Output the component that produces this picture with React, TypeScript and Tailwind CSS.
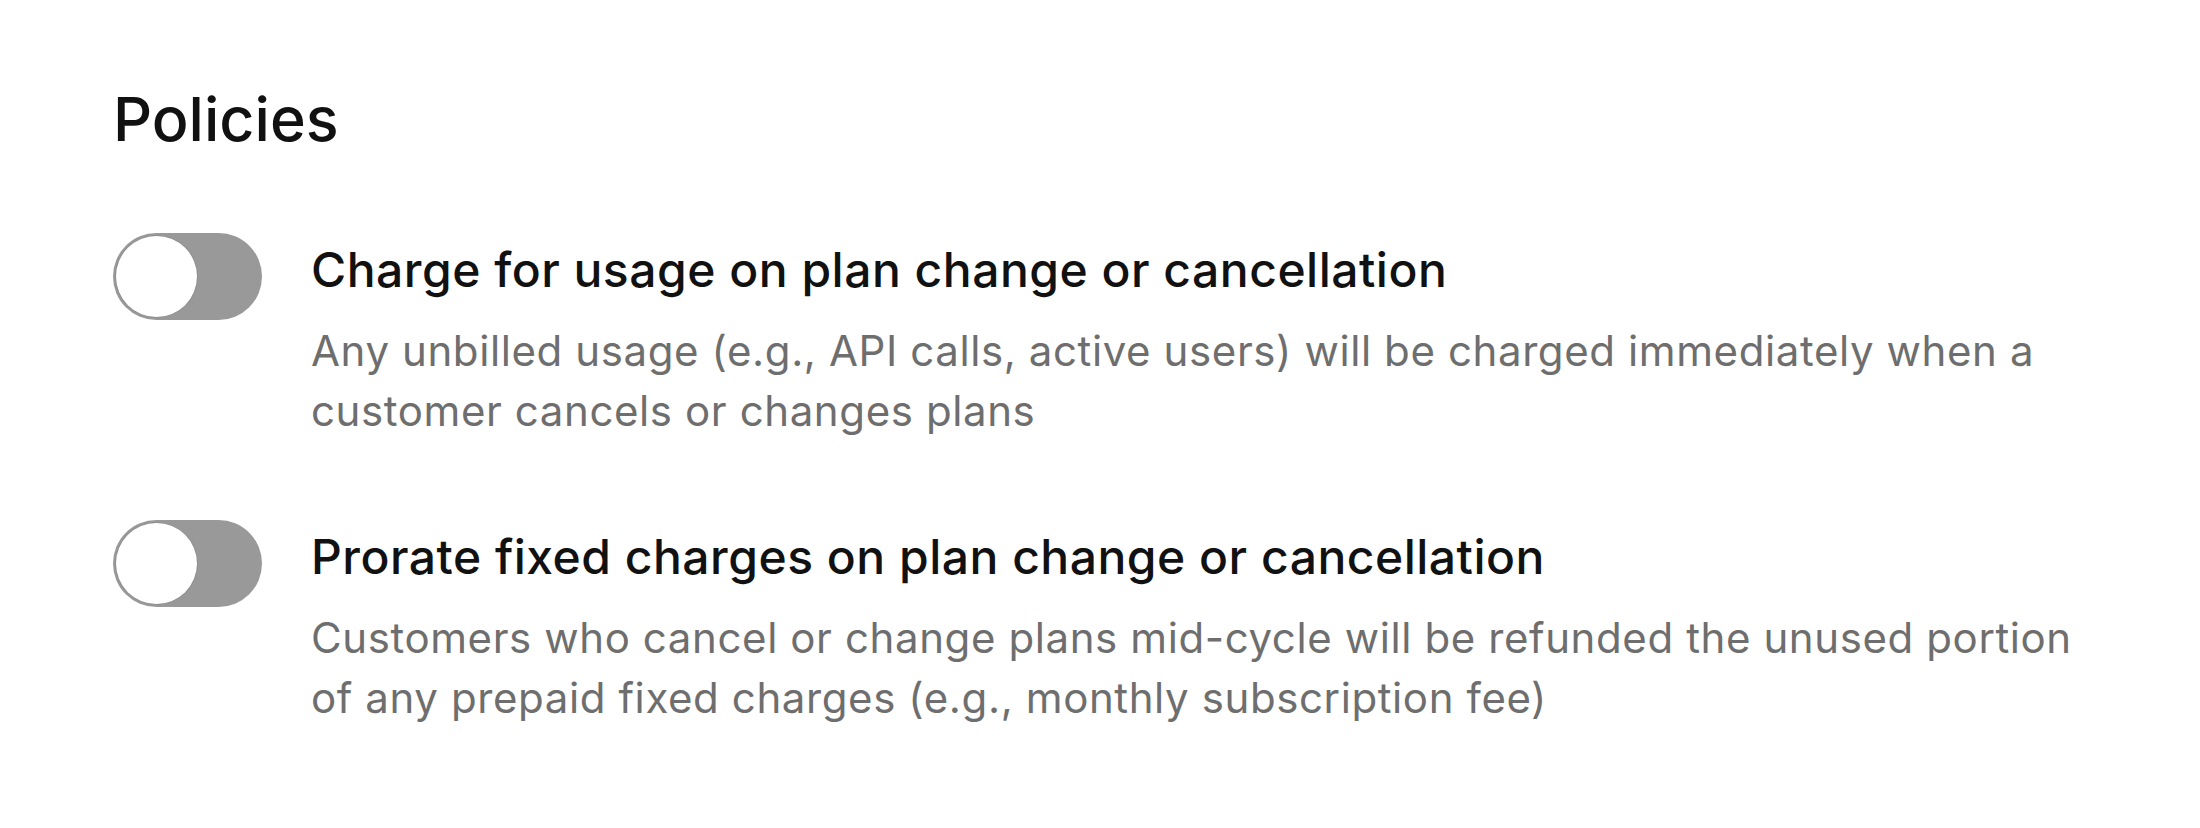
import React, { useState } from 'react';

type Policy = {
  id: string;
  title: string;
  description: string;
};

const policies: Policy[] = [
  {
    id: 'usage',
    title: 'Charge for usage on plan change or cancellation',
    description:
      'Any unbilled usage (e.g., API calls, active users) will be charged immediately when a customer cancels or changes plans',
  },
  {
    id: 'prorate',
    title: 'Prorate fixed charges on plan change or cancellation',
    description:
      'Customers who cancel or change plans mid-cycle will be refunded the unused portion of any prepaid fixed charges (e.g., monthly subscription fee)',
  },
];

const Toggle = ({ checked, onChange }: { checked: boolean; onChange: () => void }) => (
  <button
    type="button"
    role="switch"
    aria-checked={checked}
    onClick={onChange}
    className={`flex h-[87px] w-[149px] shrink-0 items-center rounded-full p-[3px] ${
      checked ? 'justify-end bg-[#1a1a1a]' : 'justify-start bg-[#999999]'
    }`}
  >
    <span className="h-[81px] w-[81px] rounded-full bg-white shadow-[0_0_0_1px_#8f8f8f]" />
  </button>
);

export default function App() {
  const [enabled, setEnabled] = useState<Record<string, boolean>>({});

  return (
    <div className="min-h-[828px] w-full bg-white px-[113px] pt-[76px] font-['Inter',sans-serif]">
      <h2 className="text-[61px] leading-[87px] font-medium text-[#111111]">Policies</h2>
      <div className="mt-[70px] flex flex-col gap-[79px]">
        {policies.map((p) => (
          <div key={p.id} className="flex flex-row items-start gap-[49px]">
            <Toggle
              checked={!!enabled[p.id]}
              onChange={() => setEnabled((s) => ({ ...s, [p.id]: !s[p.id] }))}
            />
            <div className="flex flex-1 flex-col pt-[1px]">
              <div className="text-[48px] leading-[72px] font-medium tracking-[0.5px] text-[#111111]">
                {p.title}
              </div>
              <div className="mt-[15px] text-[42px] leading-[60px] tracking-[0.6px] text-[#6e6e6e]">
                {p.description}
              </div>
            </div>
          </div>
        ))}
      </div>
    </div>
  );
}
